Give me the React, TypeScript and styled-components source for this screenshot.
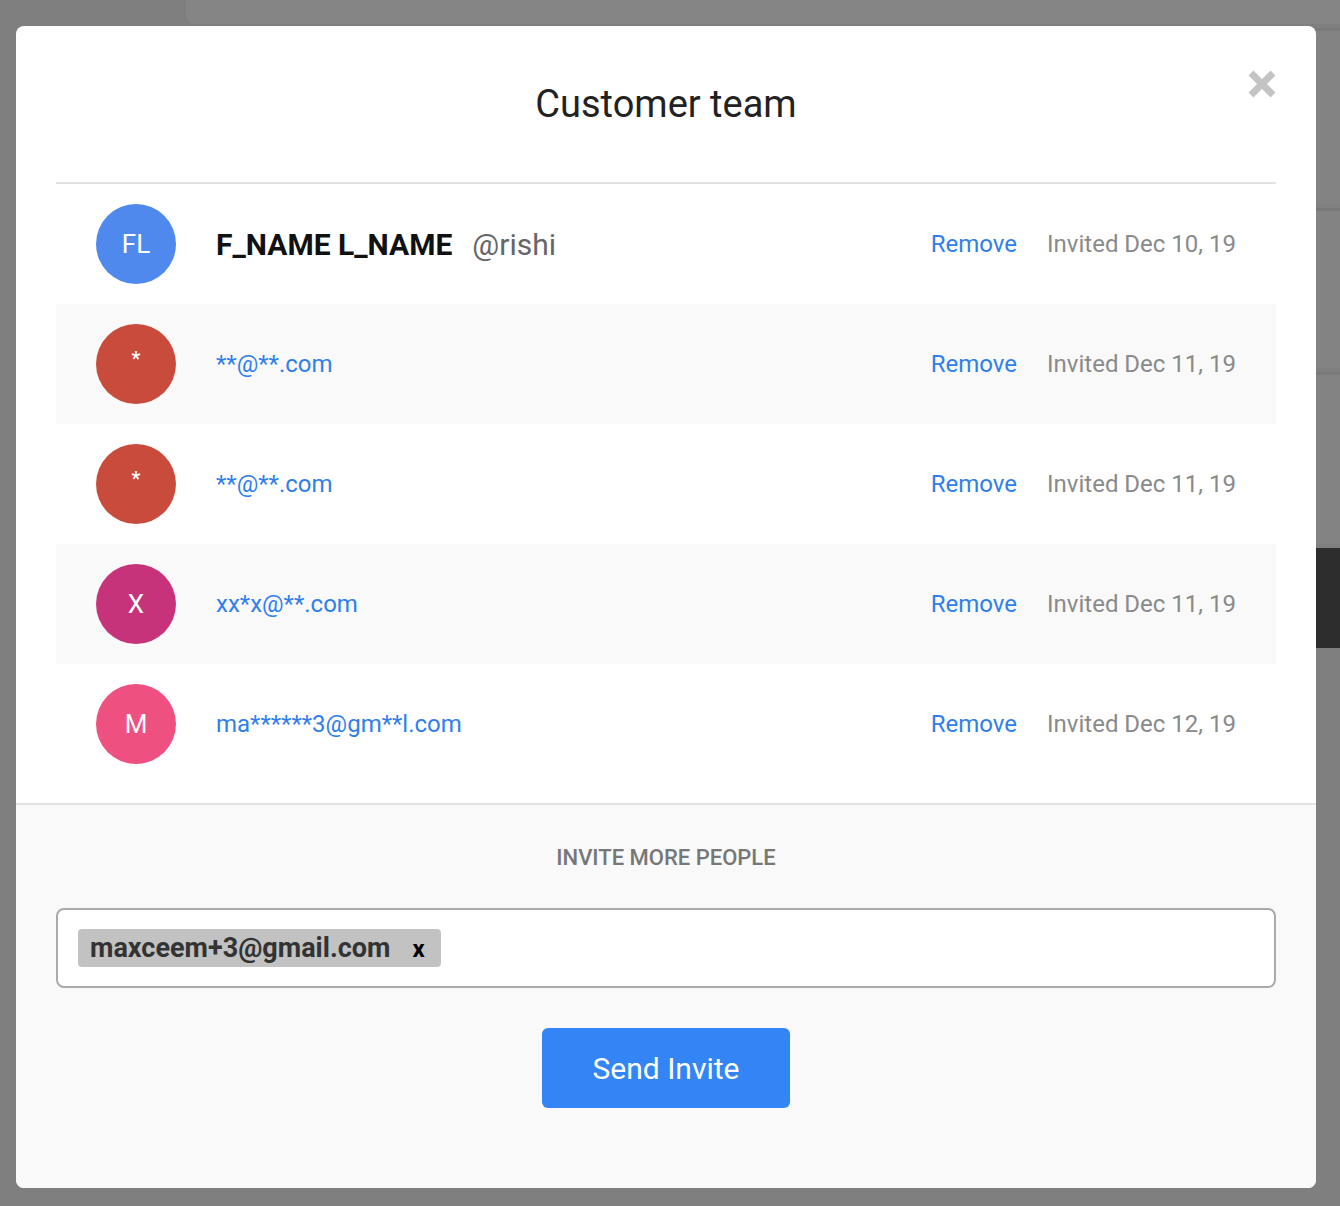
import styled, { createGlobalStyle } from "styled-components";

const GlobalStyle = createGlobalStyle`
  html, body {
    margin: 0;
    padding: 0;
    background: #7f7f7f;
    font-family: Roboto, "Liberation Sans", Arial, sans-serif;
  }
  * { box-sizing: border-box; }
`;

const Page = styled.div`
  position: relative;
  width: 1340px;
  height: 1206px;
  overflow: hidden;
  background: #7f7f7f;
`;

const TopCard = styled.div`
  margin-left: 186px;
  height: 24px;
  background: #858585;
  border-bottom-left-radius: 10px;
`;

const SideColumn = styled.div`
  margin-left: 1316px;
  display: flex;
  flex-direction: column;
  gap: 4px;
  margin-top: 4px;
`;

const SidePanel = styled.div<{ $h: number; $dark?: boolean }>`
  height: ${(p) => p.$h}px;
  background: ${(p) => (p.$dark ? "#2d2d2d" : "#838383")};
  border-top: ${(p) => (p.$dark ? "none" : "3px solid #797979")};
`;

const Modal = styled.div`
  position: absolute;
  left: 16px;
  top: 26px;
  width: 1300px;
  height: 1162px;
  background: #fff;
  border-radius: 8px;
  overflow: hidden;
  display: flex;
  flex-direction: column;
`;

const Header = styled.div`
  position: relative;
  margin: 0 40px;
  height: 161px;
  border-bottom: 2px solid #e2e2e2;
  display: flex;
  align-items: center;
  justify-content: center;
`;

const Title = styled.h2`
  margin: 0;
  font-size: 38px;
  font-weight: 400;
  color: #222;
`;

const Close = styled.button`
  position: absolute;
  right: -2px;
  top: 42px;
  width: 32px;
  height: 32px;
  padding: 0;
  border: none;
  background: none;
  cursor: pointer;
  display: flex;
  align-items: center;
  justify-content: center;
`;

const List = styled.div`
  margin: 0 40px;
  padding-bottom: 19px;
  display: flex;
  flex-direction: column;
`;

const Row = styled.div<{ $alt?: boolean }>`
  height: 120px;
  display: flex;
  align-items: center;
  padding: 0 40px;
  background: ${(p) => (p.$alt ? "#f9f9f9" : "transparent")};
`;

const Avatar = styled.div<{ $bg: string; $small?: boolean }>`
  width: 80px;
  height: 80px;
  border-radius: 50%;
  flex: none;
  background: ${(p) => p.$bg};
  color: #fff;
  display: flex;
  align-items: center;
  justify-content: center;
  font-size: ${(p) => (p.$small ? "20px" : "26px")};
  font-weight: ${(p) => (p.$small ? 500 : 400)};
  padding-bottom: ${(p) => (p.$small ? "10px" : "0")};
`;

const Who = styled.div`
  flex: 1;
  margin-left: 40px;
  display: flex;
  align-items: baseline;
  gap: 20px;
`;

const Name = styled.span`
  font-size: 30px;
  font-weight: 700;
  color: #111;
`;

const Handle = styled.span`
  font-size: 30px;
  color: #666;
`;

const Email = styled.span`
  font-size: 24px;
  color: #2f80ed;
`;

const Remove = styled.a`
  font-size: 24px;
  color: #2f80ed;
  cursor: pointer;
`;

const Invited = styled.span`
  margin-left: 30px;
  font-size: 24px;
  color: #8a8a8a;
`;

const Footer = styled.div`
  flex: 1;
  background: #f9f9f9;
  border-top: 2px solid #e2e2e2;
  padding: 40px 40px 80px;
  display: flex;
  flex-direction: column;
  align-items: center;
`;

const SectionLabel = styled.div`
  font-size: 22px;
  font-weight: 500;
  color: #777;
`;

const InviteBox = styled.div`
  margin-top: 38px;
  width: 100%;
  height: 80px;
  background: #fff;
  border: 2px solid #aaa;
  border-radius: 8px;
  display: flex;
  align-items: center;
  padding: 0 20px;
`;

const Chip = styled.div`
  height: 38px;
  display: flex;
  align-items: center;
  gap: 22px;
  padding: 0 16px 0 12px;
  background: #c2c2c2;
  border-radius: 4px;
`;

const ChipText = styled.span`
  font-size: 27px;
  font-weight: 700;
  color: #333;
`;

const ChipClose = styled.span`
  font-size: 24px;
  font-weight: 700;
  color: #000;
  margin-top: 1px;
`;

const SendButton = styled.button`
  margin-top: 40px;
  width: 248px;
  height: 80px;
  border: none;
  border-radius: 6px;
  background: #3385f6;
  color: #fff;
  font-family: inherit;
  font-size: 30px;
  font-weight: 400;
  cursor: pointer;
`;

type Member = {
  initials: string;
  color: string;
  email: string;
  invited: string;
};

const members: Member[] = [
  { initials: "*", color: "#c84b3c", email: "**@**.com", invited: "Invited Dec 11, 19" },
  { initials: "*", color: "#c84b3c", email: "**@**.com", invited: "Invited Dec 11, 19" },
  { initials: "X", color: "#c7337b", email: "xx*x@**.com", invited: "Invited Dec 11, 19" },
  { initials: "M", color: "#ee5080", email: "ma******3@gm**l.com", invited: "Invited Dec 12, 19" },
];

export default function App() {
  return (
    <Page>
      <GlobalStyle />
      <TopCard />
      <SideColumn>
        <SidePanel $h={176} />
        <SidePanel $h={160} />
        <SidePanel $h={172} />
        <SidePanel $h={100} $dark />
      </SideColumn>
      <Modal>
        <Header>
          <Title>Customer team</Title>
          <Close aria-label="Close">
            <svg width="30" height="30" viewBox="0 0 30 30">
              <path d="M4 4 L26 26 M26 4 L4 26" stroke="#c4c4c4" strokeWidth="7" strokeLinecap="butt" />
            </svg>
          </Close>
        </Header>
        <List>
          <Row>
            <Avatar $bg="#5089ee">FL</Avatar>
            <Who>
              <Name>F_NAME L_NAME</Name>
              <Handle>@rishi</Handle>
            </Who>
            <Remove>Remove</Remove>
            <Invited>Invited Dec 10, 19</Invited>
          </Row>
          {members.map((m, i) => (
            <Row key={i} $alt={i % 2 === 0}>
              <Avatar $bg={m.color} $small={m.initials === "*"}>
                {m.initials}
              </Avatar>
              <Who>
                <Email>{m.email}</Email>
              </Who>
              <Remove>Remove</Remove>
              <Invited>{m.invited}</Invited>
            </Row>
          ))}
        </List>
        <Footer>
          <SectionLabel>INVITE MORE PEOPLE</SectionLabel>
          <InviteBox>
            <Chip>
              <ChipText>maxceem+3@gmail.com</ChipText>
              <ChipClose>x</ChipClose>
            </Chip>
          </InviteBox>
          <SendButton>Send Invite</SendButton>
        </Footer>
      </Modal>
    </Page>
  );
}
